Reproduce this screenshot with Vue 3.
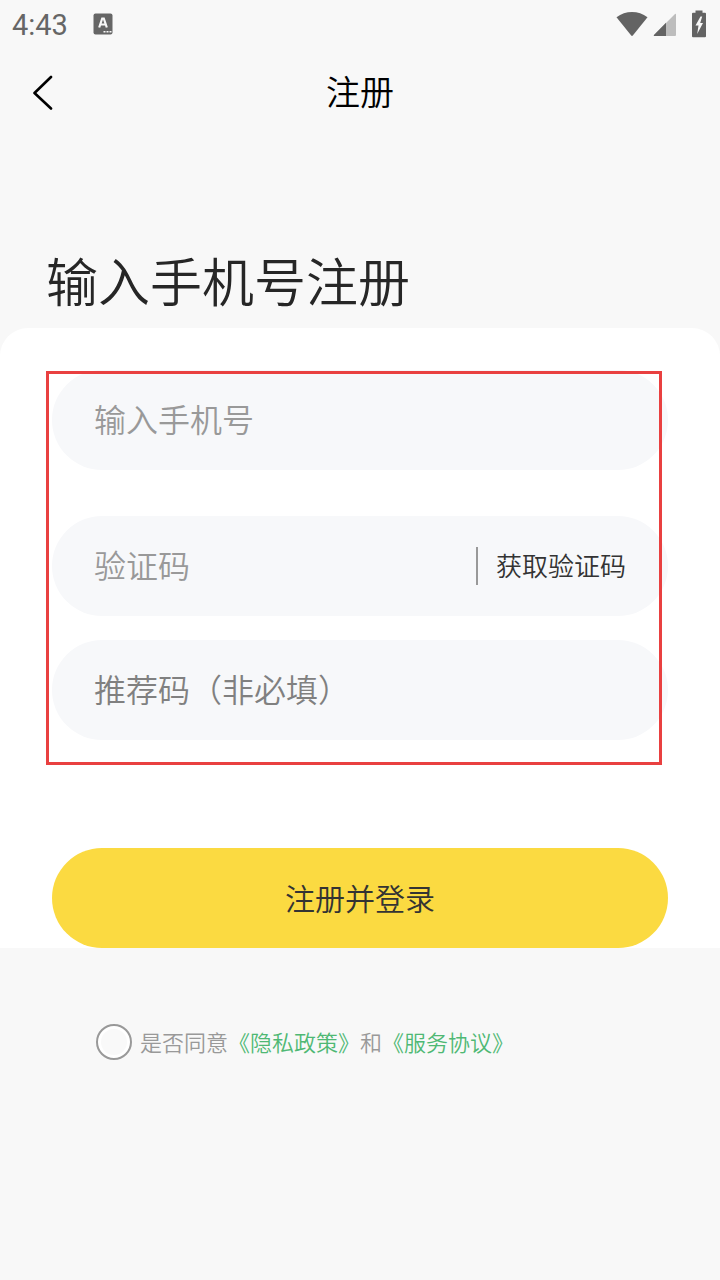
<script setup>
import { ref } from 'vue'

const phone = ref('')
const code = ref('')
const referral = ref('')
const agreed = ref(false)
</script>

<template>
  <div class="page">
    <div class="status">
      <span class="time">4:43</span>
      <svg class="keyboard" width="20" height="22" viewBox="0 0 20 22" aria-hidden="true">
        <rect x="0.500" y="0.500" width="19" height="21" rx="2" fill="#666" />
        <path d="M6.200 14.500 9.200 5.500h1.600l3 9M7.400 11.500h5.200" fill="none" stroke="#f8f8f8" stroke-width="2.200" />
        <path d="M10.500 18.700h2m1 0h2m1 0h2" stroke="#f8f8f8" stroke-width="1.400" />
      </svg>
      <svg class="wifi" width="32" height="26" viewBox="0 0 32 26" aria-hidden="true">
        <path d="M.5 6.200C9.500-.8 22.500-.8 31.500 6.200L17 24.300q-1 1.200-2 0Z" fill="#636363" />
      </svg>
      <svg class="signal" width="24" height="24" viewBox="0 0 24 24" aria-hidden="true">
        <path d="M22 2q1-.8 1 .5V23q0 1-1 1H2q-2 0-.8-1.300Z" fill="#bdbdbd" />
        <path d="M13 10.800V24H2q-2 0-.8-1.300Z" fill="#636363" />
      </svg>
      <svg class="battery" width="16" height="28" viewBox="0 0 16 28" aria-hidden="true">
        <path d="M4.500 0h7v2.500H14q1 0 1 1V28q0 1-1 1H2q-1 0-1-1V3.500q0-1 1-1h2.500Z" transform="translate(0 .5) scale(1 .92)" fill="#636363" />
        <path d="M9.500 6.500 4.500 15.500h3L6.200 24 12 13H9.200l2-6.500Z" fill="#f8f8f8" />
      </svg>
    </div>

    <header class="nav">
      <button class="back" type="button" aria-label="返回">
        <svg width="22" height="36" viewBox="0 0 22 36" aria-hidden="true">
          <path d="M19 3 2.500 19l16.500 15.500" fill="none" stroke="#000" stroke-width="2.600" stroke-linecap="round" stroke-linejoin="round" />
        </svg>
      </button>
      <span class="title">注册</span>
    </header>

    <h1 class="heading">输入手机号注册</h1>

    <form class="card" @submit.prevent>
      <div class="fields">
        <div class="field">
          <input v-model="phone" class="input" type="tel" placeholder="输入手机号" aria-label="输入手机号" />
        </div>
        <div class="field code">
          <input v-model="code" class="input" type="text" placeholder="验证码" aria-label="验证码" />
          <button class="get" type="button">获取验证码</button>
        </div>
        <div class="field optional">
          <input v-model="referral" class="input" type="text" placeholder="推荐码（非必填）" aria-label="推荐码（非必填）" />
        </div>
        <div class="outline"></div>
      </div>
      <button class="submit" type="submit">注册并登录</button>
    </form>

    <div class="terms">
      <input id="agree" v-model="agreed" class="radio" type="checkbox" />
      <p class="text"><label for="agree">是否同意</label><a href="#privacy">《隐私政策》</a>和<a href="#service">《服务协议》</a></p>
    </div>
  </div>
</template>

<style>
body {
  background: #f8f8f8;
}
</style>

<style scoped>
.page {
  min-height: 100vh;
  background: #f8f8f8;
  font-family: "Noto Sans CJK SC", "Noto Sans", sans-serif;
  font-weight: 350;
}
.page * {
  box-sizing: border-box;
}
button,
input {
  margin: 0;
  padding: 0;
  border: 0;
  background: none;
  font-family: inherit;
  font-weight: inherit;
}
svg {
  display: block;
}
.status {
  display: flex;
  align-items: center;
  height: 48px;
  padding: 0 13px 0 12px;
}
.time {
  padding-top: 2px;
  color: #666;
  font-family: Roboto, sans-serif;
  font-size: 29px;
  font-weight: 400;
  line-height: 46px;
}
.keyboard {
  margin-left: 25px;
}
.wifi {
  margin-left: auto;
}
.signal {
  margin-left: 5px;
}
.battery {
  margin-left: 14px;
}
.nav {
  display: grid;
  grid-template-columns: 1fr auto 1fr;
  align-items: center;
  height: 88px;
  padding: 0 32px;
}
.back {
  justify-self: start;
  cursor: pointer;
}
.title {
  padding-bottom: 2px;
  font-size: 34px;
  line-height: 48px;
  color: #000;
}
.heading {
  margin: 0;
  padding: 106px 46px 10px;
  font-size: 52px;
  line-height: 76px;
  font-weight: inherit;
  color: #262626;
}
.card {
  padding: 42px 52px 0;
  border-radius: 28px 28px 0 0;
  background: #fff;
}
.fields {
  position: relative;
}
.field {
  display: flex;
  align-items: center;
  height: 100px;
  padding: 0 42px;
  border-radius: 50px;
  background: #f7f8fa;
}
.code {
  margin-top: 46px;
}
.optional {
  margin-top: 24px;
}
.input {
  flex: 1;
  min-width: 0;
  height: 60px;
  padding-bottom: 4px;
  font-size: 32px;
  color: #262626;
  outline: none;
}
.input::placeholder {
  color: #999;
  opacity: 1;
}
.optional .input::placeholder {
  color: #808080;
}
.get {
  height: 38px;
  padding: 0 0 2px 18px;
  border-left: 2px solid #999;
  font-size: 26px;
  line-height: 36px;
  color: #333;
  cursor: pointer;
}
.outline {
  position: absolute;
  inset: 1px 6px -25px -6px;
  border: 3px solid #e94040;
  pointer-events: none;
}
.submit {
  display: block;
  width: 100%;
  height: 100px;
  margin-top: 108px;
  padding-bottom: 2px;
  border-radius: 50px;
  background: #fbda41;
  font-size: 30px;
  color: #333;
  cursor: pointer;
}
.terms {
  display: flex;
  align-items: center;
  gap: 8px;
  padding: 76px 52px 0 96px;
}
.radio {
  appearance: none;
  flex: none;
  width: 36px;
  height: 36px;
  border: 2px solid #999;
  border-radius: 50%;
  background: #f9f9f9;
  box-shadow: inset 0 0 0 3px #fff;
}
.radio:checked {
  background: #fbda41;
}
.text {
  margin: 0;
  padding-bottom: 2px;
  font-size: 22px;
  line-height: 32px;
  color: #999;
}
.text a {
  color: #4fb874;
  text-decoration: none;
}
</style>
